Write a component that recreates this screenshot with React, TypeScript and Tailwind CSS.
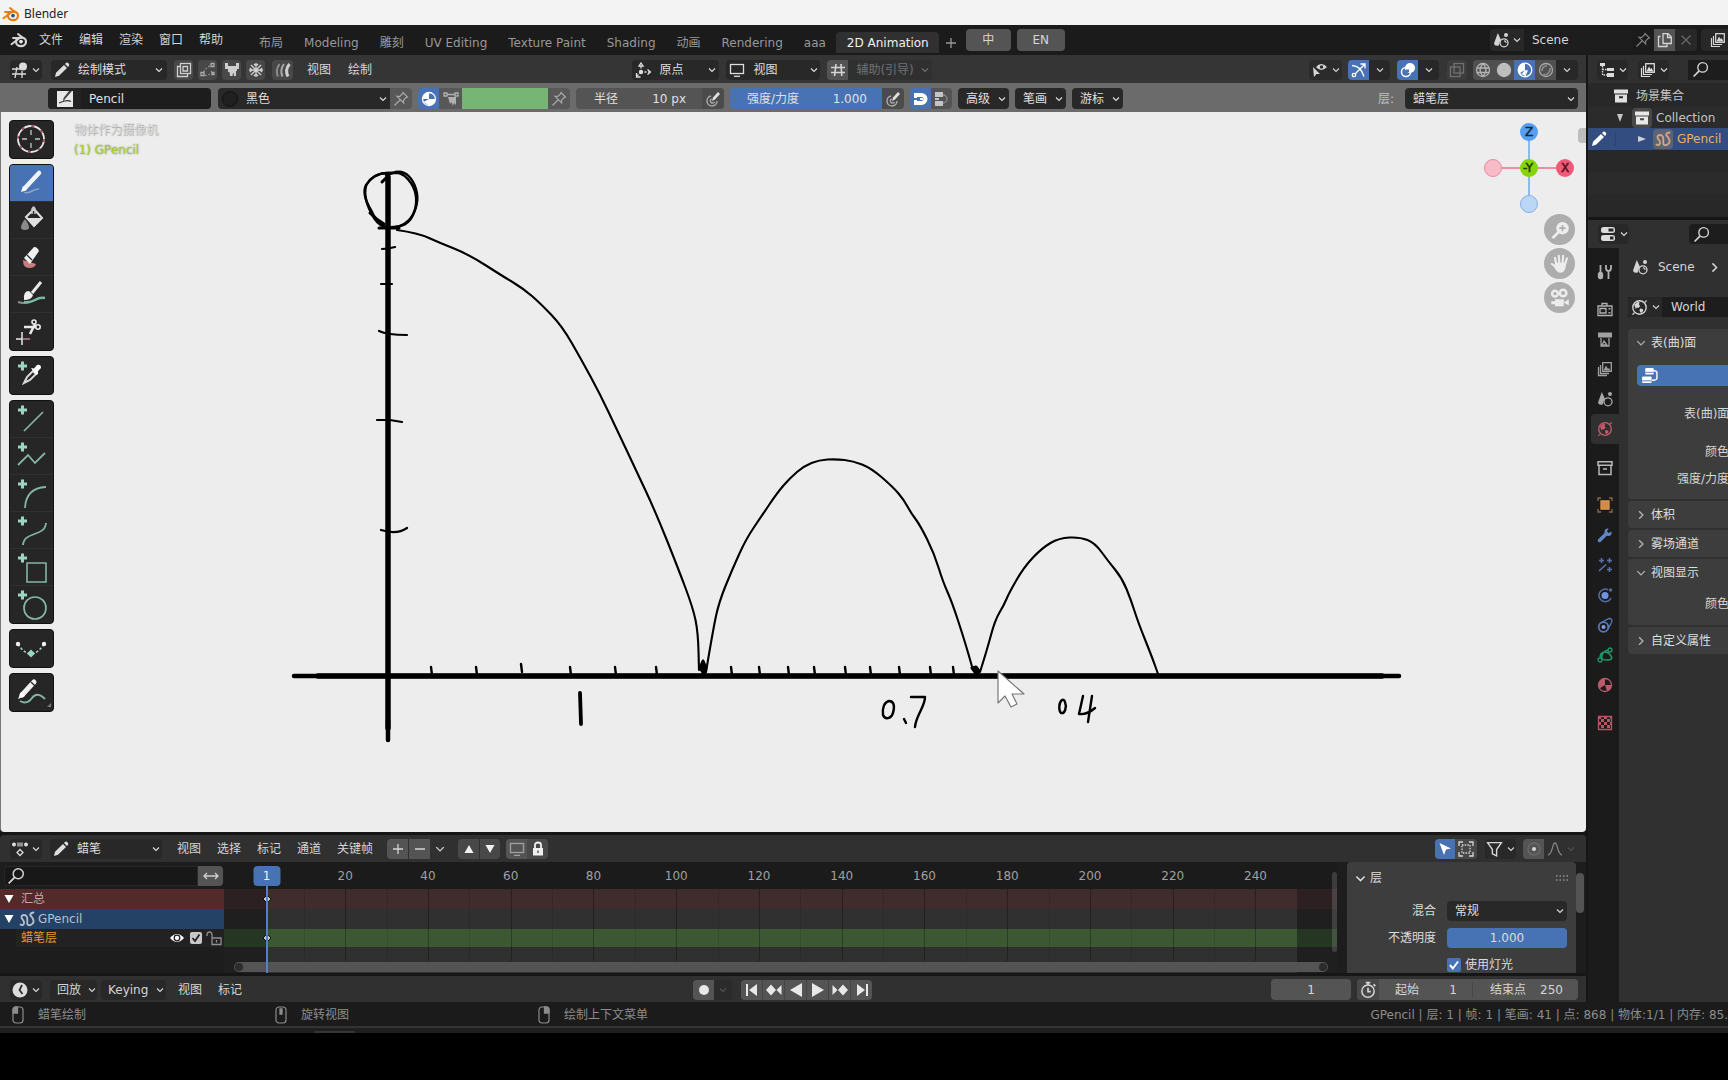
import { useState } from 'react'
import type { ReactNode } from 'react'

type IconProps = { className?: string }

const frames = [20, 40, 60, 80, 100, 120, 140, 160, 180, 200, 220, 240]
const workspaces = ['布局', 'Modeling', '雕刻', 'UV Editing', 'Texture Paint', 'Shading', '动画', 'Rendering', 'aaa', '2D Animation']

// first and last frame visible in the dope sheet
const FRAME_START = -9.3
const FRAME_SPAN = 269
const framePos = (frame: number) => `${((frame - FRAME_START) / FRAME_SPAN) * 100}%`

/* ---------- icons ---------- */

function Icon({ children, className = 'size-4', box = '0 0 16 16' }: { children: ReactNode; className?: string; box?: string }) {
  return (
    <svg viewBox={box} className={`shrink-0 ${className}`} fill="none" stroke="currentColor" strokeWidth="1.3" aria-hidden="true">
      {children}
    </svg>
  )
}

const Chevron = ({ className = 'size-2' }: IconProps) => (
  <Icon className={className} box="0 0 8 8">
    <path d="M1 2.5 4 5.5 7 2.5" strokeWidth="1.1" />
  </Icon>
)

const BlenderLogo = ({ className, dot = '#e8e8e8' }: IconProps & { dot?: string }) => (
  <Icon className={className} box="0 0 18 16">
    <path d="M1.5 12.2 9 6.5M3 6h8M8 2l5.5 4.3" strokeWidth="2" strokeLinecap="round" />
    <ellipse cx="11" cy="9.8" rx="5" ry="4.4" strokeWidth="2.2" />
    <circle cx="11" cy="9.6" r="1.9" fill={dot} stroke="none" />
  </Icon>
)

const PencilIcon = ({ className }: IconProps) => (
  <Icon className={className}>
    <path d="M1 15l1-4.2L10 3l3 3-8 7.8zM11 2l1.2-1.2q1-.6 2 .3l.6.6q.9 1 .2 2L14 5z" fill="currentColor" stroke="none" />
  </Icon>
)

const PinIcon = ({ className }: IconProps) => (
  <Icon className={className}>
    <path d="M10 1.5 14.5 6l-1.5.6-2.5 2.6.2 2.8L4 5.3l2.8.2L9.4 3zM7 9l-5.5 5.5" strokeWidth="1.2" />
  </Icon>
)

const GreaseIcon = ({ className }: IconProps) => (
  <Icon className={className}>
    <path
      d="M1.5 13.5c2 1.500 4 0 3.500-2.500S1.800 7.500 2.500 5.500 6.500 3.500 7.800 5.500 7.600 12 8.600 13.500s5.400.5 5.900-2.500-2-5.500-3-6.500 0-2.500 3-3"
      strokeWidth="1.800"
      strokeLinecap="round"
    />
  </Icon>
)

const MonitorIcon = ({ className }: IconProps) => (
  <Icon className={className}>
    <rect x="1.5" y="2.5" width="13" height="9" />
    <path d="M5 14.3h6" />
  </Icon>
)

const SearchIcon = ({ className }: IconProps) => (
  <Icon className={className}>
    <circle cx="10" cy="6" r="4.5" />
    <path d="M6.8 9.3 1.5 14.6" strokeWidth="1.6" />
  </Icon>
)

const SceneIcon = ({ className }: IconProps) => (
  <Icon className={className}>
    <path d="M4.8 1 8 8q-1.8 1.5-2.3 5.5Q1.5 14.5 1 11.5z" fill="currentColor" stroke="none" />
    <circle cx="13" cy="3" r="2" fill="currentColor" stroke="none" />
    <circle cx="11" cy="10.8" r="4" />
    <path d="M11 8.8q2 0 2 2" />
  </Icon>
)

const worldArt = (
  <>
    <circle cx="8" cy="8" r="6.3" />
    <path d="M13 3.200q1.500-1.700 1.700-1.700M3 13q-1 1.500-1.700 1.300" />
    <path d="M3 5.500 6.500 2.500 8 3l-.5 2.500 1.200 1L7 8.500 5.500 8 4.500 9.500zM8.500 9l2.500.5.500 1.500-2 2.500L8 11z" fill="currentColor" stroke="none" />
  </>
)

const LayersIcon = ({ className }: IconProps) => (
  <Icon className={className}>
    <path d="M1.5 6v8.5H10M3.5 4v8.5H12" strokeWidth="1.2" />
    <rect x="5.7" y="1.7" width="8.6" height="8.6" />
    <path d="M6.5 9.5 9 4.5l1.5 2.5 1-1 2 3.5z" fill="currentColor" stroke="none" />
  </Icon>
)

const CollectionIcon = ({ className }: IconProps) => (
  <Icon className={className}>
    <path d="M1 1.5h14v4H1z" fill="currentColor" stroke="none" />
    <path d="M2 6.5h12v8H2zM6 8.2v2h4v-2z" fill="currentColor" stroke="none" fillRule="evenodd" />
  </Icon>
)

const GridIcon = ({ className }: IconProps) => (
  <Icon className={className}>
    <path d="M1 5.5h14M1 10.5h14M6 2 4.5 14M11 2l.8 12" strokeWidth="1.6" />
  </Icon>
)

const PressureIcon = ({ className }: IconProps) => (
  <Icon className={className}>
    <path d="M6 5a5 5 0 1 0 6 5M6.5 8a2.2 2.2 0 1 0 3 3" stroke="#a8a8a8" strokeWidth="1.5" />
    <path d="M7 10 8 6.5 13 1l2 2-5 5.5z" fill="currentColor" stroke="none" />
  </Icon>
)

const MaterialIcon = ({ className }: IconProps) => (
  <Icon className={className}>
    <circle cx="8" cy="8" r="6.5" />
    <path d="M8 8V1.500A6.500 6.500 0 0 0 1.500 8zM8 8h6.500A6.500 6.500 0 0 1 8 14.500zM8 8v6.500L2.500 11z" fill="currentColor" stroke="none" />
  </Icon>
)

const MouseIcon = ({ button }: { button: 'left' | 'middle' | 'right' }) => (
  <Icon className="h-[18px] w-3" box="0 0 12 18">
    <rect x="1" y="1" width="10" height="16" rx="3" strokeWidth="1.2" />
    {button === 'left' && <path d="M1 4q0-3 3-3h1.5v6H1z" fill="currentColor" />}
    {button === 'middle' && <path d="M5 3h2v5H5z" fill="currentColor" />}
    {button === 'right' && <path d="M6.5 1H8q3 0 3 3v3H6.5z" fill="currentColor" />}
  </Icon>
)

/* ---------- small controls ---------- */

function Btn({ label, className = '', children }: { label: string; className?: string; children: ReactNode }) {
  return (
    <button type="button" aria-label={label} title={label} className={`flex shrink-0 items-center justify-center ${className}`}>
      {children}
    </button>
  )
}

function EditorMenu({ label, children, className = 'w-8' }: { label: string; children: ReactNode; className?: string }) {
  return (
    <Btn label={label} className={`h-5 gap-1 rounded bg-[#282828] text-[#dcdcdc] ${className}`}>
      {children}
      <Chevron />
    </Btn>
  )
}

function Dropdown({ label, value, icon, className = '' }: { label: string; value: string; icon?: ReactNode; className?: string }) {
  return (
    <div className={`flex shrink-0 items-center rounded bg-[#282828] px-2 text-[#dedede] ${className}`}>
      {icon && <span className="mr-2 flex">{icon}</span>}
      <select aria-label={label} defaultValue={value} className="min-w-0 flex-1 appearance-none bg-transparent outline-none">
        <option>{value}</option>
      </select>
      <Chevron />
    </div>
  )
}

function MenuButton({ children }: { children: ReactNode }) {
  return (
    <button type="button" className="shrink-0">
      {children}
    </button>
  )
}

/* ---------- top bars ---------- */

function TopBar() {
  const [active, setActive] = useState('2D Animation')
  return (
    <header className="flex h-[30px] items-center overflow-hidden bg-[#1b1b1b] text-[#d5d5d5]">
      <BlenderLogo className="ml-[10px] h-4 w-[18px]" />
      <nav className="ml-[11px] flex gap-4">
        {['文件', '编辑', '渲染', '窗口', '帮助'].map((item) => (
          <MenuButton key={item}>{item}</MenuButton>
        ))}
      </nav>
      <div className="ml-[25px] flex h-full items-end pb-[2px]" role="tablist">
        {workspaces.map((name) => (
          <button
            key={name}
            type="button"
            role="tab"
            aria-selected={active === name}
            onClick={() => setActive(name)}
            className={`h-[21px] shrink-0 rounded-t pl-[11px] pr-[10px] ${active === name ? 'bg-[#303030] text-[#f0f0f0]' : 'text-[#989898]'}`}
          >
            {name}
          </button>
        ))}
        <Btn label="添加工作区" className="ml-[2px] size-[21px] text-[#989898]">
          <Icon className="size-3" box="0 0 12 12">
            <path d="M6 1v10M1 6h10" />
          </Icon>
        </Btn>
      </div>
      <button type="button" className="ml-1 h-[22px] w-[45px] shrink-0 rounded bg-[#545454]">中</button>
      <button type="button" className="ml-[6px] h-[22px] w-12 shrink-0 rounded bg-[#545454]">EN</button>
      <div className="ml-auto flex h-[22px] w-[238px] shrink-0 overflow-hidden">
        <Btn label="场景" className="w-[34px] gap-1 rounded-l bg-[#282828]">
          <SceneIcon className="size-4" />
          <Chevron />
        </Btn>
        <input aria-label="场景名称" defaultValue="Scene" className="w-[108px] bg-[#1d1d1d] pl-2 outline-none" />
        <Btn label="固定" className="w-[22px] text-[#808080]">
          <PinIcon className="size-4" />
        </Btn>
        <Btn label="新建场景" className="w-[21px] bg-[#545454]">
          <Icon className="size-4">
            <path d="M6 1.7h5L14.3 5v6.5H6zM10.5 2v3.5H14M3.5 4.5h-2v10h8.500v-2" />
          </Icon>
        </Btn>
        <Btn label="删除场景" className="w-[22px] rounded-r bg-[#282828] text-[#686868]">
          <Icon className="size-3" box="0 0 12 12">
            <path d="m1.5 1.5 9 9M10.5 1.5l-9 9" />
          </Icon>
        </Btn>
        <Btn label="视图层" className="ml-1 w-[34px] rounded bg-[#282828]">
          <LayersIcon className="size-4" />
        </Btn>
      </div>
    </header>
  )
}

const BrushToggle = ({ label, children, wide = false }: { label: string; children: ReactNode; wide?: boolean }) => (
  <Btn label={label} className={`h-5 rounded bg-[#484848] text-[#cfcfcf] ${wide ? 'ml-[2px] w-[21px]' : 'w-[19px]'}`}>
    {children}
  </Btn>
)

function ViewHeader() {
  return (
    <div className="flex h-7 items-center bg-[#353535] pl-[10px] pr-2 pt-px text-[#d5d5d5]">
      <EditorMenu label="编辑器类型">
        <Icon className="size-4">
          <path d="M0 7h9M0 12h14M5 5 3 16M10 9v7" />
          <circle cx="11" cy="4.5" r="4" fill="currentColor" stroke="none" />
        </Icon>
      </EditorMenu>
      <Dropdown label="模式" value="绘制模式" icon={<PencilIcon className="size-4" />} className="ml-[9px] h-5 w-[116px] pl-[3px] pr-1" />
      <div className="ml-[7px] flex gap-[5px]">
        <BrushToggle label="多帧">
          <Icon>
            <rect x="4.5" y="1.5" width="10" height="10" />
            <path d="M4 4.5H1.5v10h10V12M7 4.5h4.5V9H7z" />
          </Icon>
        </BrushToggle>
        <BrushToggle label="相加绘制">
          <Icon>
            <path d="M4 10q1-4 6-6M5 13.5q5 0 7-5" strokeDasharray="1.5 2" stroke="#999" />
            <path d="M1 10.5h3v3H1zM11 1.5h3v3h-3zM12 10.5h2v2h-2z" stroke="#aaa" />
          </Icon>
        </BrushToggle>
        <BrushToggle label="自动融合">
          <Icon>
            <path d="M1 1h3v3h8V1h3v6h-2v2h-1v5h-2l-.5-3H9l-.5 3H6l-.5-4H4V7H1z" fill="currentColor" stroke="none" />
          </Icon>
        </BrushToggle>
        <BrushToggle label="冻结">
          <Icon>
            <path d="M8 1v14M1 8h14M3 3l10 10M13 3 3 13M6 2l2 2 2-2M6 14l2-2 2 2M2 6l2 2-2 2M14 6l-2 2 2 2" />
          </Icon>
        </BrushToggle>
        <BrushToggle label="笔刷引导" wide>
          <Icon>
            <path d="M4.5 2Q0 8 3 14.5" stroke="#8d8d8d" strokeWidth="2" />
            <path d="M9 2Q4.5 8 7.5 14.5" stroke="#a8a8a8" strokeWidth="2" />
            <path d="M14.5 2q-5 6-1.500 12.500" strokeWidth="3" />
          </Icon>
        </BrushToggle>
      </div>
      <nav className="ml-[14px] flex gap-[17px]">
        <MenuButton>视图</MenuButton>
        <MenuButton>绘制</MenuButton>
      </nav>
      <div className="flex-[260]" />
      <Dropdown
        label="笔画位置"
        value="原点"
        className="h-5 w-[87px] pl-[3px] pr-[3px]"
        icon={
          <Icon>
            <path d="M6 10V3M6 10h8M6 10l-4 4" strokeDasharray="2 1.5" />
            <path d="M4 4l2-3 2 3zM12.5 7.5 15.5 10l-3 2.500M1.500 11v4h4" />
            <circle cx="6" cy="10" r="2.2" fill="currentColor" stroke="none" />
          </Icon>
        }
      />
      <Dropdown label="绘制平面" value="视图" className="ml-[7px] h-5 w-[94px] pl-[3px] pr-[2px]" icon={<MonitorIcon className="size-4" />} />
      <Btn label="辅助引导" className="ml-[7px] h-5 w-[21px] rounded-l bg-[#545454]">
        <GridIcon className="size-4" />
      </Btn>
      <button type="button" disabled className="flex h-5 w-[84px] shrink-0 items-center justify-between bg-[#303030] pl-2 pr-[3px] text-[#707070]">
        辅助(引导)
        <Chevron />
      </button>
      <div className="flex-[376]" />
      <Btn label="物体可见性" className="h-5 w-[33px] gap-1 rounded bg-[#2b2b2b]">
        <Icon>
          <path d="M4 5q5-6 11 0-6 6-11 0z" fill="currentColor" stroke="none" />
          <circle cx="9.5" cy="5" r="1.7" fill="#2b2b2b" stroke="none" />
          <path d="M1 5l7 7H4.5L2 15z" fill="currentColor" stroke="none" />
        </Icon>
        <Chevron />
      </Btn>
      <Btn label="显示 Gizmo" className="ml-[6px] h-5 w-[21px] rounded-l bg-[#4772b3] text-white">
        <Icon>
          <path d="M1 3.5q9 .5 12 11M4 12l9.5-9.500M9.500 2H14v4.500" />
          <circle cx="3" cy="13" r="1.7" />
        </Icon>
      </Btn>
      <Btn label="Gizmo 选项" className="h-5 w-[21px] rounded-r bg-[#282828]">
        <Chevron />
      </Btn>
      <Btn label="叠加层" className="ml-[7px] h-5 w-[21px] rounded-l bg-[#4772b3] text-white">
        <Icon>
          <circle cx="10" cy="6" r="5" fill="currentColor" stroke="none" />
          <circle cx="6" cy="10" r="4.5" strokeWidth="1.5" />
          <path d="M6 10V7.500h3V10z" fill="#4772b3" stroke="none" />
        </Icon>
      </Btn>
      <Btn label="叠加层选项" className="h-5 w-[21px] rounded-r bg-[#282828]">
        <Chevron />
      </Btn>
      <Btn label="透视模式" className="ml-2 h-5 w-5 rounded bg-[#3d3d3d] text-[#707070]">
        <Icon>
          <rect x="5" y="1.5" width="9.5" height="9.5" />
          <rect x="1.5" y="5" width="9.5" height="9.5" />
        </Icon>
      </Btn>
      <div className="ml-[6px] flex h-5 overflow-hidden rounded">
        <Btn label="线框" className="w-5 bg-[#505050] text-[#b5b5b5]">
          <Icon>
            <circle cx="8" cy="8" r="6.5" />
            <path d="M8 1.5q-6 6.5 0 13M8 1.5q6 6.5 0 13M2 6h12M2 10.5h12" />
          </Icon>
        </Btn>
        <Btn label="实体" className="w-[21px] bg-[#505050] text-[#bdbdbd]">
          <Icon>
            <circle cx="8" cy="8" r="7.2" fill="currentColor" stroke="none" />
          </Icon>
        </Btn>
        <Btn label="材质预览" className="w-[21px] bg-[#4772b3] text-white">
          <Icon>
            <circle cx="8" cy="8" r="6.8" />
            <path d="M8 8V1.200A6.800 6.800 0 0 0 2 11.500l1.500 2zM8 8l3 .5-2 4.500zM3 11l5-3 1 6.500z" fill="currentColor" stroke="none" />
          </Icon>
        </Btn>
        <Btn label="渲染" className="w-[21px] bg-[#505050] text-[#a8a8a8]">
          <Icon>
            <circle cx="8" cy="8" r="6.5" />
            <path d="M4 9a4.5 4.5 0 0 1 5-5M5 12.5Q11 14 12.5 6" strokeWidth="1.800" stroke="#888" />
          </Icon>
        </Btn>
        <Btn label="着色选项" className="w-[22px] bg-[#282828]">
          <Chevron />
        </Btn>
      </div>
    </div>
  )
}

function ToolSettings() {
  return (
    <div className="flex h-[29px] items-center bg-[#6b6b6b] pl-12 pr-2 pt-[2px] text-[#e0e0e0]">
      <div className="flex h-[21px] w-[163px] shrink-0 overflow-hidden rounded bg-[#1d1d1d]">
        <Btn label="笔刷" className="w-[33px] bg-[#222222]">
          <Icon>
            <path d="M0 0h16v16H0z" fill="#e8e8e8" stroke="none" />
            <path d="M15 0 8 8l-2 3 .5-4L12 0z" fill="#444" stroke="none" />
            <path d="M2 12q8-4 12-1.5" stroke="#333" />
          </Icon>
        </Btn>
        <input aria-label="笔刷名称" defaultValue="Pencil" className="min-w-0 flex-1 bg-transparent pl-2 outline-none" />
      </div>
      <Dropdown
        label="材质"
        value="黑色"
        className="ml-[7px] h-[21px] w-[172px] rounded-r-none pl-1 pr-[3px]"
        icon={<span className="size-4 rounded-full border border-[#111111] bg-[#202020]" />}
      />
      <Btn label="固定材质" className="h-[21px] w-[22px] rounded-r bg-[#585858] text-[#a8a8a8]">
        <PinIcon className="size-4" />
      </Btn>
      <div className="ml-[6px] flex h-[21px] overflow-hidden rounded bg-[#585858]">
        <Btn label="材质颜色" className="w-[21px] bg-[#4772b3] text-white">
          <MaterialIcon className="size-4" />
        </Btn>
        <Btn label="顶点色" className="w-[23px] text-[#b0b0b0]">
          <Icon>
            <path d="M1 2h3v3H1zM12 2h3v3h-3zM4 3.5h8" />
            <path d="M5 6h8v8l-2-2-1 3-1.5-4L7 13z" fill="currentColor" stroke="none" />
          </Icon>
        </Btn>
        <Btn label="颜色" className="w-[86px] bg-[#76b574]">
          <span />
        </Btn>
        <Btn label="固定颜色" className="w-[22px] text-[#a8a8a8]">
          <PinIcon className="size-4" />
        </Btn>
      </div>
      <div className="ml-[6px] flex h-[21px] shrink-0 items-center overflow-hidden rounded bg-[#545454]">
        <label htmlFor="radius" className="w-[60px] pl-[18px]">半径</label>
        <input id="radius" defaultValue="10 px" className="w-[66px] bg-transparent pr-4 text-right outline-none" />
        <Btn label="半径压感" className="h-full w-[22px] bg-[#4b4b4b]">
          <PressureIcon className="size-4" />
        </Btn>
      </div>
      <div className="ml-[6px] flex h-[21px] shrink-0 items-center overflow-hidden rounded bg-[#4772b3]">
        <label htmlFor="strength" className="w-[80px] pl-[17px]">强度/力度</label>
        <input id="strength" defaultValue="1.000" className="w-[72px] bg-transparent pr-[15px] text-right outline-none" />
        <Btn label="力度压感" className="h-full w-[22px] bg-[#4b4b4b]">
          <PressureIcon className="size-4" />
        </Btn>
      </div>
      <div className="ml-[6px] flex h-[21px] overflow-hidden rounded">
        <Btn label="绘制模式" className="w-[21px] bg-[#4772b3] text-white">
          <Icon>
            <path d="M2 4h6.500a4 4 0 0 1 0 8H2" strokeWidth="4" />
            <path d="M1 2h3v5H1zM1 9h3v5H1zM7 7h3v2H7z" fill="currentColor" stroke="none" />
          </Icon>
        </Btn>
        <Btn label="材质模式" className="w-[21px] bg-[#545454] text-[#c5c5c5]">
          <Icon>
            <path d="M1 1h8v5H1zM1 10h8v5H1zM1 7h4v2H1z" fill="currentColor" stroke="none" />
            <path d="M9 4a4 4 0 0 1 0 8" stroke="#888" />
          </Icon>
        </Btn>
      </div>
      {['高级', '笔画', '游标'].map((name) => (
        <button key={name} type="button" className="ml-[6px] flex h-[21px] w-[51px] shrink-0 items-center justify-between rounded bg-[#282828] pl-2 pr-[3px]">
          {name}
          <Chevron />
        </button>
      ))}
      <span className="ml-auto mr-[11px] text-[#c0c0c0]">层:</span>
      <Dropdown label="层" value="蜡笔层" className="h-[21px] w-[173px] pr-[3px]" />
    </div>
  )
}

/* ---------- viewport ---------- */

const Plus = () => <path d="M8 9h9M12.500 4.500v9" stroke="#9bd6c0" strokeWidth="3" />

const toolGroups: { name: string; art: ReactNode }[][] = [
  [
    {
      name: '游标',
      art: (
        <>
          <circle cx="21" cy="18" r="13" stroke="#e8e8e8" strokeWidth="1.8" />
          <circle cx="21" cy="18" r="13" stroke="#a0495a" strokeWidth="1.8" strokeDasharray="3 7.2" />
          <path d="M21 9v5M21 22v5M12 18h5M25 18h5" stroke="#c8c8c8" strokeWidth="1.300" />
        </>
      ),
    },
  ],
  [
    {
      name: '自由线',
      art: (
        <>
          <path d="M15 23 29 8" stroke="#eef3fb" strokeWidth="4.500" strokeLinecap="round" />
          <path d="m11 27 2-6 4 4z" fill="#fff" stroke="none" />
          <path d="M14 27q3 2 8-1 4-2 7-2" stroke="#8aa2cc" strokeWidth="1.500" />
        </>
      ),
    },
    {
      name: '填充',
      art: (
        <>
          <path d="m16 15 8-8 8 9-8 8z" stroke="#e0e0e0" strokeWidth="2" />
          <path d="M17 16h14l-7 8z" fill="#e0e0e0" stroke="none" />
          <path d="M22 12V7q2-4 3 0v5" stroke="#c8c8c8" strokeWidth="1.600" />
          <path d="M15 17q-8 11 0 11t0-11z" fill="#8a8a8a" stroke="none" />
        </>
      ),
    },
    {
      name: '擦除',
      art: (
        <>
          <path d="M13 21q0 8 6 8t7-4z" fill="#c87c80" stroke="none" />
          <path d="m14 19 10-11q3-.500 5 4L20 25z" fill="#f0f0f0" stroke="none" />
          <path d="m17 16 5 5" stroke="#262626" />
        </>
      ),
    },
    {
      name: '着色',
      art: (
        <>
          <path d="m31 6-9 11" stroke="#e8e8e8" strokeWidth="3" />
          <path d="M14 24q-1-9 5-9l4 4q-1 5-9 5z" fill="#f0f0f0" stroke="none" />
          <path d="M8 26q6 2 12 0" stroke="#909090" strokeWidth="2" />
          <path d="M14 26q6 1 11-2t10-2" stroke="#79b8a5" strokeWidth="2.600" />
        </>
      ),
    },
    {
      name: '剪切',
      art: (
        <>
          <path d="M14 14h12M20 21l5-10" stroke="#e8e8e8" strokeWidth="2.6" />
          <circle cx="24" cy="9" r="2" stroke="#e8e8e8" strokeWidth="1.600" />
          <circle cx="28" cy="14" r="2.200" stroke="#e8e8e8" strokeWidth="1.600" />
          <path d="M12 19v13M6 26h6" stroke="#e8e8e8" strokeWidth="1.500" />
          <path d="M13 26h7" stroke="#c8808c" strokeWidth="1.500" />
        </>
      ),
    },
  ],
  [
    {
      name: '吸管',
      art: (
        <>
          <Plus />
          <path d="m14 26 3-6 6-6 3 3-6 6z" stroke="#d8d8d8" strokeWidth="2" />
          <path d="m21 11 3 .5L27 8q4-1 4 3l-3 3v3l-2 1z" fill="#fff" stroke="none" />
        </>
      ),
    },
  ],
  [
    { name: '线', art: <><Plus /><path d="M14 30 33 11" stroke="#85b5a4" strokeWidth="1.700" /></> },
    { name: '折线', art: <><Plus /><path d="m8 27 10-10 7 8 10-10" stroke="#85b5a4" strokeWidth="1.800" /></> },
    { name: '弧线', art: <><Plus /><path d="M15 33Q16 13 36 12" stroke="#85b5a4" strokeWidth="1.800" /></> },
    { name: '曲线', art: <><Plus /><path d="M13 33c1-14 22-8 23-22" stroke="#85b5a4" strokeWidth="1.800" /></> },
    { name: '方框', art: <><Plus /><path d="M17 14h19v19H17z" stroke="#85b5a4" strokeWidth="1.600" /></> },
    { name: '圆', art: <><Plus /><circle cx="25" cy="22" r="11" stroke="#85b5a4" strokeWidth="1.700" /></> },
  ],
  [
    {
      name: '插值',
      art: (
        <>
          <path d="M8 14q13 20 26 0" stroke="#a8c8bc" strokeDasharray="2.5 2" strokeWidth="1.600" />
          <circle cx="8" cy="14" r="2.200" fill="#f0f0f0" stroke="none" />
          <circle cx="34" cy="14" r="2.200" fill="#f0f0f0" stroke="none" />
          <path d="m21 19.500 4 4-4 4-4-4z" fill="#9bd6c0" stroke="none" />
        </>
      ),
    },
  ],
  [
    {
      name: '标注',
      art: (
        <>
          <path d="M12 21 24 8" stroke="#f0f0f0" strokeWidth="5" strokeLinecap="round" />
          <path d="M8 25l3-7 4 4z" fill="#fff" stroke="none" />
          <path d="M21 8l4 4" stroke="#262626" />
          <path d="M10 27q7 4 12-3t13 1" stroke="#85b5a4" strokeWidth="2" />
          <path d="M41 29v4h-4z" fill="#777" stroke="none" />
        </>
      ),
    },
  ],
]

function Toolbar() {
  const [active, setActive] = useState('自由线')
  return (
    <div className="relative flex w-[45px] flex-col gap-[5px]">
      {toolGroups.map((group, i) => (
        <div key={i} className="divide-y divide-[#303030] overflow-hidden rounded border border-[#111111] bg-[#262626]">
          {group.map((tool) => (
            <button
              key={tool.name}
              type="button"
              aria-label={tool.name}
              aria-pressed={active === tool.name}
              onClick={() => setActive(tool.name)}
              className={`flex h-[37px] w-full ${active === tool.name ? 'bg-[#4772b3]' : ''}`}
            >
              <Icon className="h-9 w-[43px]" box="0 0 43 36">{tool.art}</Icon>
            </button>
          ))}
        </div>
      ))}
    </div>
  )
}

type Point = [number, number]

const bounces: Point[][] = [
  [
    [397, 230], [418, 233], [440, 243], [468, 254], [504, 277], [524, 289], [541, 304], [562, 326], [581, 359], [600, 394],
    [617, 430], [636, 470], [656, 513], [678, 568], [693, 608], [698, 632], [699, 670],
  ],
  [
    [706, 672], [713, 630], [719, 602], [732, 570], [746, 539], [761, 517], [777, 493], [790, 478], [804, 466], [819, 460],
    [836, 459], [853, 461], [871, 468], [893, 487], [904, 500], [911, 513], [920, 525], [934, 553], [943, 582], [952, 602],
    [965, 642], [973, 670],
  ],
  [
    [980, 672], [987, 650], [995, 620], [1004, 605], [1009, 593], [1024, 567], [1042, 548], [1059, 538], [1080, 537],
    [1095, 543], [1108, 561], [1122, 578], [1131, 600], [1138, 622], [1152, 657], [1158, 674],
  ],
]

// rounds the corners by curving through the midpoint of each segment
function smooth(points: Point[]) {
  const [first, ...rest] = points
  const last = points[points.length - 1]
  const parts = rest.slice(0, -1).map(([x, y], i) => {
    const [nx, ny] = rest[i + 1]
    return `Q${x} ${y} ${(x + nx) / 2} ${(y + ny) / 2}`
  })
  return `M${first[0]} ${first[1]}${parts.join('')}L${last[0]} ${last[1]}`
}

// Strokes on the grease pencil canvas
function Drawing() {
  const xTicks = [432, 477, 522, 571, 616, 657, 732, 760, 789, 815, 846, 871, 900, 931, 954]
  return (
    <svg viewBox="1 112 1585 720" preserveAspectRatio="xMinYMin slice" className="absolute inset-0 size-full" fill="none" stroke="#000" strokeLinecap="round" strokeLinejoin="round" aria-hidden="true">
      <path d="M388 177V728" strokeWidth="5.5" />
      <path d="M388 720v20" strokeWidth="4.5" />
      <path d="M318 676H1382" strokeWidth="5.5" />
      <path d="M294 676H1399" strokeWidth="4.5" />
      <path d="M382 182l5-5" strokeWidth="3" />

      {/* ball */}
      <path d="M392 173c-14-1-22 5-26 13-3 11 2 22 8 32 4 6 9 9 14 9 10 1 20-1 25-12 5-11 4-23-2-32-5-7-9-10-15-11l-10 3" strokeWidth="2.4" />
      <path d="M396 172c10-2 17 7 20 17 3 10 1 22-7 31-6 6-12 8-24 7-7-3-11-10-14-17-6-10-8-19-5-25 4-7 12-12 21-12l13 0" strokeWidth="2.4" />
      <path d="M370 213q7 7 14 11M379 228h20" strokeWidth="3" />

      {bounces.map((points, i) => (
        <path key={i} d={smooth(points)} strokeWidth="2.1" />
      ))}

      {xTicks.map((x) => (
        <path key={x} d={`M${x - 1} ${x === 522 ? 664 : 667}l1 8`} strokeWidth="2.4" />
      ))}
      <path d="M382 249q6 0 13-2M381 284h11M379 331q8 4 28 4M377 420l13 0 12 2M381 530q16 5 26-2" strokeWidth="2.2" />
      <path d="M700 668l3-7 3 7-2 6zM972 668l4-1 3 4-2 4z" fill="#000" strokeWidth="3" />

      {/* handwritten height ratios */}
      <path d="M580 693l1 31" strokeWidth="3.8" />
      <path d="M889 701c-5 1-7 8-6 14 2 5 8 4 10-2 2-7 1-12-4-12zM904 719l2 4M911 697h14c0 10-9 18-10 30" strokeWidth="2.4" />
      <path d="M1062 700c-4 3-3 11-1 13 4 1 6-6 4-11q-1-3-3-2zM1083 696l-4 18q8 1 16-6M1092 696l-4 26" strokeWidth="2.4" />

      {/* mouse pointer */}
      <path d="M998 671v32l7-7 6 11 6-3-5-10h12z" fill="#fff" stroke="#777" strokeWidth="1.2" />
    </svg>
  )
}

function Gizmo() {
  return (
    <svg viewBox="0 0 92 92" className="size-[92px]" fontSize="12" textAnchor="middle" aria-label="视图方向">
      <path d="M10 46h72" stroke="#ee6a84" strokeWidth="1.5" />
      <path d="M46 10v72" stroke="#6aa8f0" strokeWidth="1.5" />
      <circle cx="10" cy="46" r="8.5" fill="#f8bcc8" stroke="#e889a0" />
      <circle cx="82" cy="46" r="9" fill="#ee5a78" />
      <circle cx="46" cy="10" r="9" fill="#559ff0" />
      <circle cx="46" cy="82" r="8.5" fill="#bcd6f6" stroke="#85b0e6" />
      <circle cx="46" cy="46" r="9" fill="#88d40c" />
      <g strokeWidth="0.5">
        <text x="46" y="14" fill="#10253c" stroke="#10253c">Z</text>
        <text x="45" y="50" fill="#203a00" stroke="#203a00">-Y</text>
        <text x="82" y="50" fill="#581020" stroke="#581020">X</text>
      </g>
    </svg>
  )
}

function Viewport() {
  return (
    <main className="relative min-h-0 flex-1 overflow-hidden rounded-b border-l border-[#777777] bg-[#ededed]">
      <Drawing />
      <div className="relative flex justify-between pl-2 pt-2">
        <div className="flex">
          <Toolbar />
          <div className="ml-5 flex flex-col gap-1 pt-[2px]">
            <p className="text-[#dadada] [text-shadow:1px_1px_1px_#a0a0a0]">物体作为摄像机</p>
            <p className="text-[#a6cc2c] [text-shadow:0_0_2px_#8a9a50]">(1) GPencil</p>
          </div>
        </div>
        <div className="flex flex-col items-end pr-[11px] pt-[2px]">
          <Gizmo />
          <div className="flex flex-col gap-[3px] text-[#ededed]">
            <Btn label="缩放" className="size-[31px] rounded-full bg-[#adadad]">
              <Icon className="size-5">
                <circle cx="10" cy="6.5" r="5" fill="currentColor" stroke="none" />
                <path d="M7 9.5 2 14.5" strokeWidth="2.2" />
                <path d="M10 4v5M7.5 6.5h5" stroke="#adadad" />
              </Icon>
            </Btn>
            <Btn label="平移" className="size-[31px] rounded-full bg-[#adadad]">
              <Icon className="size-5">
                <path d="M5 8 4 3M7.5 7.5 7 1.5M10 7.5l.5-6M12 8.5 13.5 3.5M5.5 11 1.5 8" strokeWidth="1.7" strokeLinecap="round" />
                <path d="M4.2 7h8.500q.5 8-4.700 8Q5.500 15 3 10z" fill="currentColor" stroke="none" />
              </Icon>
            </Btn>
            <Btn label="摄像机视图" className="size-[31px] rounded-full bg-[#adadad]">
              <Icon className="size-5">
                <circle cx="4" cy="4.5" r="2.3" strokeWidth="2" />
                <circle cx="10.5" cy="4" r="2.6" strokeWidth="2" />
                <path d="M4 9h7v5.500H4zM11 11.500l4-2.500v5zM4 10.500H1V13h3z" fill="currentColor" stroke="none" />
              </Icon>
            </Btn>
          </div>
        </div>
      </div>
      <Btn label="显示侧栏" className="absolute right-0 top-4 h-[15px] w-2 rounded-l bg-[#bdbdbd]">
        <span />
      </Btn>
    </main>
  )
}

/* ---------- dope sheet ---------- */

function DopeHeader() {
  return (
    <div className="mt-[3px] flex h-[27px] shrink-0 items-center rounded-t bg-[#303030] pl-[10px] pr-2 pt-px text-[#d5d5d5]">
      <EditorMenu label="编辑器类型">
        <Icon>
          <circle cx="2" cy="3.5" r="2" fill="currentColor" stroke="none" />
          <circle cx="14" cy="3.5" r="2" fill="currentColor" stroke="none" />
          <path d="M5 1.5h6v4H5z" fill="#909090" stroke="none" />
          <path d="m8 8.5 3 3-3 3-3-3z" />
        </Icon>
      </EditorMenu>
      <Dropdown label="动画模式" value="蜡笔" icon={<PencilIcon className="size-4" />} className="ml-2 h-5 w-[112px] pl-[3px] pr-[2px]" />
      <nav className="ml-[15px] flex gap-4">
        {['视图', '选择', '标记', '通道', '关键帧'].map((item) => (
          <MenuButton key={item}>{item}</MenuButton>
        ))}
      </nav>
      <div className="ml-[14px] flex h-5 gap-px overflow-hidden rounded-l">
        <Btn label="添加" className="w-[21px] bg-[#545454]">
          <Icon className="size-3" box="0 0 12 12"><path d="M6 1v10M1 6h10" /></Icon>
        </Btn>
        <Btn label="移除" className="w-[21px] bg-[#545454]">
          <Icon className="size-3" box="0 0 12 12"><path d="M1 6h10" /></Icon>
        </Btn>
      </div>
      <Btn label="更多" className="ml-[3px] h-5 w-[14px]">
        <Chevron className="size-[10px]" />
      </Btn>
      <div className="ml-[11px] flex h-5 gap-px overflow-hidden rounded text-[#f0f0f0]">
        <Btn label="上移" className="w-[21px] bg-[#484848]">
          <Icon className="size-3" box="0 0 12 12"><path d="M6 2 10.500 10h-9z" fill="currentColor" stroke="none" /></Icon>
        </Btn>
        <Btn label="下移" className="w-[20px] bg-[#484848]">
          <Icon className="size-3" box="0 0 12 12"><path d="M6 10 10.500 2h-9z" fill="currentColor" stroke="none" /></Icon>
        </Btn>
      </div>
      <div className="ml-[6px] flex h-5 overflow-hidden rounded">
        <Btn label="仅显示选中" className="w-[21px] bg-[#545454] text-[#a0a0a0]"><MonitorIcon className="size-4" /></Btn>
        <Btn label="锁定" className="w-[21px] bg-[#484848] text-[#f0f0f0]">
          <Icon>
            <path d="M3 7h10v7.500H3z" fill="currentColor" stroke="none" />
            <path d="M5 7V4q0-2.500 3-2.500T11 4v3" strokeWidth="1.8" />
            <path d="M8 9.500v2.500" stroke="#484848" />
          </Icon>
        </Btn>
      </div>
      <div className="ml-auto flex h-5 overflow-hidden rounded">
        <Btn label="仅选中项" className="w-5 bg-[#4772b3] text-white">
          <Icon><path d="M2.500 2 14 7.500l-5 1L7 14z" fill="currentColor" stroke="none" /></Icon>
        </Btn>
        <Btn label="显示隐藏" className="w-[22px] bg-[#484848]">
          <Icon>
            <path d="M1 5V1h4M11 1h4v4M15 11v4h-4M5 15H1v-4" />
            <path d="M4 4h8v8H4z" strokeDasharray="1.5 1.2" />
          </Icon>
        </Btn>
      </div>
      <Btn label="过滤" className="ml-2 h-5 w-[31px] gap-1 rounded bg-[#282828]">
        <Icon className="size-[17px]"><path d="M1.500 1.500h13L10 8v6l-4-2V8z" /></Icon>
        <Chevron />
      </Btn>
      <Btn label="衰减编辑" className="ml-[7px] h-5 w-[21px] rounded-l bg-[#545454]">
        <Icon>
          <circle cx="8" cy="8" r="6" stroke="#6a6a6a" />
          <circle cx="8" cy="8" r="2" fill="currentColor" stroke="none" />
        </Icon>
      </Btn>
      <Btn label="衰减类型" className="h-5 w-[34px] gap-1 text-[#858585]">
        <Icon><path d="M1 14c5-1 4-12 7-12s2 11 7 12" /></Icon>
        <Chevron className="size-2 text-[#505050]" />
      </Btn>
    </div>
  )
}

const DownTriangle = () => (
  <svg viewBox="0 0 10 10" className="size-[10px] shrink-0 text-white" fill="currentColor" aria-hidden="true">
    <path d="M.500 1h9L5 9z" />
  </svg>
)

function Channels() {
  return (
    <div className="w-56 shrink-0 bg-[#1d1d1d] pt-1">
      <div className="mb-[3px] flex h-5 items-center pl-1 pr-px">
        <label className="flex h-full flex-1 items-center rounded-l border border-[#282828] bg-[#181818] pl-[2px] text-[#d5d5d5]">
          <SearchIcon className="size-[18px]" />
          <input aria-label="搜索通道" className="w-full min-w-0 bg-transparent outline-none" />
        </label>
        <Btn label="反转过滤" className="h-5 w-[25px] rounded-r bg-[#545454] text-[#d0d0d0]">
          <Icon><path d="M1 8h14M4 5 1 8l3 3M12 5l3 3-3 3" /></Icon>
        </Btn>
      </div>
      <div className="flex h-5 items-center gap-[7px] bg-[#522a2a] pl-1 text-[#c0a8a8]">
        <DownTriangle />
        汇总
      </div>
      <div className="flex h-5 items-center bg-[#244166] pl-1 text-[#b8c0cc]">
        <DownTriangle />
        <GreaseIcon className="ml-[5px] mr-[3px] size-4" />
        GPencil
      </div>
      <div className="ml-4 flex h-[18px] items-center bg-[#222222] pl-[5px] text-[#e09a22]">
        蜡笔层
        <div className="ml-auto flex items-center gap-1 pr-[2px]">
          <Icon className="size-4 text-white">
            <path d="M1 8q7-8 14 0-7 8-14 0z" fill="currentColor" stroke="none" />
            <circle cx="8" cy="8" r="2.8" fill="currentColor" stroke="#222" />
          </Icon>
          <span className="relative ml-px flex">
            <input type="checkbox" aria-label="显示蜡笔层" defaultChecked className="size-3 appearance-none rounded-xs bg-[#c8c8c8]" />
            <Icon className="pointer-events-none absolute inset-0 size-3 text-[#222222]" box="0 0 12 12">
              <path d="m2.500 6 2.500 3 4.500-6.500" strokeWidth="1.8" />
            </Icon>
          </span>
          <Icon className="size-4 text-[#909090]">
            <path d="M6 8h9v6.500H6zM6 8V5q0-3-2.500-3T1 5v1M10.500 10v2.500" />
          </Icon>
        </div>
      </div>
    </div>
  )
}

const Keyframe = ({ className }: IconProps) => (
  <svg viewBox="0 0 10 10" className={`absolute size-[10px] -translate-x-1/2 ${className}`} style={{ left: framePos(1) }} aria-hidden="true">
    <path d="M5 1 9 5 5 9 1 5z" fill="#c8c8c8" stroke="#111" />
  </svg>
)

function Timeline() {
  const range = { left: framePos(1), right: `calc(100% - ${framePos(250)})` }
  return (
    <div className="relative min-w-0 flex-1 overflow-hidden bg-[#1f1f1f] text-[#a0a0a0]">
      <div className="relative h-[27px] bg-[#1b1b1b]">
        {frames.map((frame) => (
          <span key={frame} className="absolute top-[6px] -translate-x-1/2" style={{ left: framePos(frame) }}>
            {frame}
          </span>
        ))}
      </div>
      <div className="absolute bottom-0 top-[27px] bg-[#303030]" style={range} />
      <div className="relative h-5 bg-[#2c2022]">
        <div className="absolute inset-y-0 bg-[#402b2d]" style={range} />
        <Keyframe className="top-[5px]" />
      </div>
      <div className="relative mt-5 h-[18px] bg-[#253623]">
        <div className="absolute inset-y-0 bg-[#3c5833]" style={range} />
        <Keyframe className="top-1" />
      </div>
      {frames.map((frame) => (
        <div key={frame} className="absolute bottom-3 top-[27px] w-px bg-black/30" style={{ left: framePos(frame) }} />
      ))}
      {frames.map((frame) => (
        <div key={frame} className="absolute bottom-3 top-[27px] w-px bg-black/10" style={{ left: framePos(frame - 10) }} />
      ))}
      <div className="absolute bottom-px left-[10px] right-[9px] flex h-[10px] items-center justify-between rounded-full bg-[#545454] px-px">
        <span className="size-2 rounded-full bg-[#2c2c2c]" />
        <span className="size-2 rounded-full bg-[#2c2c2c]" />
      </div>
      <div className="absolute right-0 top-[10px] h-[80px] w-[5px] rounded bg-white/15" />
      <div className="absolute bottom-0 top-4 w-[2px] -translate-x-1/2 bg-[#5680c2]" style={{ left: framePos(1) }} />
      <div className="absolute top-[4px] h-5 w-[27px] -translate-x-1/2 rounded bg-[#4772b3] text-center leading-5 text-[#f0f0f0]" style={{ left: framePos(1) }}>
        1
      </div>
    </div>
  )
}

function LayerPanel() {
  return (
    <aside className="flex w-[249px] shrink-0 bg-[#1d1d1d] pl-[10px]">
      <div className="flex-1 overflow-hidden rounded-t bg-[#3d3d3d] pt-2 text-[#dcdcdc]">
        <div className="mb-[15px] flex h-4 items-center pl-2 pr-2">
          <Chevron className="mr-1 size-[11px]" />
          层
          <Icon className="ml-auto h-2 w-3 text-[#909090]" box="0 0 12 8">
            <path d="M0 2h12M0 6h12" strokeDasharray="1.5 2" />
          </Icon>
        </div>
        <div className="mb-[7px] flex items-center">
          <span className="w-[89px] text-right">混合</span>
          <Dropdown label="混合" value="常规" className="ml-[11px] h-5 w-[120px] pr-[3px]" />
        </div>
        <div className="mb-[9px] flex items-center">
          <label htmlFor="opacity" className="w-[89px] text-right">不透明度</label>
          <input id="opacity" defaultValue="1.000" className="ml-[11px] h-5 w-[120px] rounded bg-[#4772b3] text-center outline-none" />
        </div>
        <div className="flex items-center pl-[100px]">
          <span className="relative flex">
            <input id="use-lights" type="checkbox" defaultChecked className="size-[14px] appearance-none rounded-xs bg-[#4772b3]" />
            <Icon className="pointer-events-none absolute inset-0 size-[14px] text-white" box="0 0 12 12">
              <path d="m2.500 6 2.500 3 4.500-6" strokeWidth="1.7" />
            </Icon>
          </span>
          <label htmlFor="use-lights" className="ml-1">使用灯光</label>
        </div>
      </div>
      <div className="w-[10px] pt-[11px]">
        <div className="h-10 w-2 rounded bg-[#545454]" />
      </div>
    </aside>
  )
}

const playback = [
  { label: '跳到首帧', art: <path d="M2 2h2v12H2zM13 2v12L5 8z" /> },
  { label: '上一关键帧', art: <path d="m5 2.500 5 5.500-5 5.500L0 8zM15.500 3v10L10.500 8z" /> },
  { label: '倒放', art: <path d="M14 1v14L2 8z" /> },
  { label: '播放', art: <path d="M2 1v14l12-7z" /> },
  { label: '下一关键帧', art: <path d="m11 2.500 5 5.500-5 5.500L6 8zM.5 3v10l5-5z" /> },
  { label: '跳到末帧', art: <path d="M12 2h2v12h-2zM3 2v12l8-6z" /> },
]

function PlaybackBar() {
  return (
    <div className="mt-[3px] flex h-[26px] shrink-0 items-center bg-[#303030] pl-[10px] pr-2 pt-px text-[#d5d5d5]">
      <EditorMenu label="编辑器类型">
        <Icon>
          <circle cx="8" cy="8" r="7.5" fill="currentColor" stroke="none" />
          <path d="M10 3 7.500 8l3 4" stroke="#282828" strokeWidth="1.7" />
        </Icon>
      </EditorMenu>
      <button type="button" className="ml-2 flex h-5 w-[47px] shrink-0 items-center justify-between rounded bg-[#282828] pl-[7px] pr-px">
        回放 <Chevron />
      </button>
      <button type="button" className="ml-1 flex h-5 w-[65px] shrink-0 items-center justify-between rounded bg-[#282828] pl-[7px] pr-[2px]">
        Keying <Chevron />
      </button>
      <nav className="ml-3 flex gap-4">
        <MenuButton>视图</MenuButton>
        <MenuButton>标记</MenuButton>
      </nav>
      <div className="flex-[451]" />
      <Btn label="自动插帧" className="h-5 w-[21px] rounded-l bg-[#545454]">
        <span className="size-[10px] rounded-full bg-[#e8e8e8]" />
      </Btn>
      <Btn label="自动插帧选项" className="h-5 w-[18px] bg-[#2b2b2b] text-[#505050]">
        <Chevron />
      </Btn>
      <div className="ml-[9px] flex h-5 gap-px overflow-hidden rounded bg-[#454545]">
        {playback.map((item) => (
          <Btn key={item.label} label={item.label} className="w-[21px] bg-[#545454] text-[#e8e8e8]">
            <svg viewBox="0 0 16 16" className="size-4" fill="currentColor" aria-hidden="true">{item.art}</svg>
          </Btn>
        ))}
      </div>
      <div className="flex-[399]" />
      <input aria-label="当前帧" defaultValue="1" className="h-[21px] w-20 shrink-0 rounded bg-[#545454] text-center outline-none" />
      <div className="ml-[6px] flex h-[21px] shrink-0 items-center overflow-hidden rounded bg-[#545454]">
        <Btn label="使用预览范围" className="h-full w-[22px] bg-[#484848]">
          <Icon className="size-[18px]">
            <circle cx="8" cy="9" r="5.5" />
            <path d="M6 1.500h4M8 2v2M13 3l1.500 1.500M8 6v3.500h2.500" strokeWidth="1.5" />
          </Icon>
        </Btn>
        <label htmlFor="start" className="w-[52px] pl-4">起始</label>
        <input id="start" defaultValue="1" className="w-[42px] border-r border-[#484848] bg-transparent pr-[15px] text-right outline-none" />
        <label htmlFor="end" className="w-[64px] pl-[17px]">结束点</label>
        <input id="end" defaultValue="250" className="w-[41px] bg-transparent pr-[15px] text-right outline-none" />
      </div>
    </div>
  )
}

/* ---------- right hand editors ---------- */

function Outliner() {
  return (
    <section className="h-[162px] shrink-0 overflow-hidden bg-[#282828] text-[#c5c5c5]">
      <div className="flex h-7 items-center bg-[#303030] pl-[9px] pt-px">
        <EditorMenu label="编辑器类型" className="w-[31px]">
          <Icon>
            <path d="M1 1h5v3H1zM8 6h7v3H8zM8 11h7v4H8z" fill="currentColor" stroke="none" />
            <path d="M3.500 4v9H8M3.500 7.500H8" strokeDasharray="1.5 1" />
          </Icon>
        </EditorMenu>
        <EditorMenu label="显示模式" className="ml-[10px] w-[31px]">
          <LayersIcon className="size-4" />
        </EditorMenu>
        <label className="ml-[19px] flex h-5 w-20 shrink-0 items-center bg-[#1d1d1d] pl-1 text-[#d5d5d5]">
          <SearchIcon className="size-[17px]" />
          <input aria-label="搜索" className="w-full min-w-0 bg-transparent outline-none" />
        </label>
      </div>
      <ul className="w-[200px] pt-[2px]">
        <li className="flex h-[22px] items-center pl-[25px]">
          <CollectionIcon className="mr-[7px] size-4 text-[#e0e0e0]" />
          场景集合
        </li>
        <li className="flex h-[21px] items-center bg-[#2b2b2b] pl-7">
          <svg viewBox="0 0 8 8" className="mr-2 size-2" fill="currentColor" aria-hidden="true"><path d="M1 0h6L4 8z" /></svg>
          <span className="mr-1 flex rounded bg-[#484848] p-[2px] text-[#e8e8e8]">
            <CollectionIcon className="size-4" />
          </span>
          Collection
        </li>
        <li className="flex h-[22px] items-center bg-[#334d80] pl-[3px] text-[#e8b060]">
          <PencilIcon className="mr-2 size-4 text-white" />
          <span className="mr-[22px] h-[14px] w-px bg-[#2c4270]" />
          <svg viewBox="0 0 8 8" className="mr-[7px] size-2 text-[#d0d0d0]" fill="currentColor" aria-hidden="true"><path d="M0 1v6l8-3z" /></svg>
          <span className="mr-1 flex rounded bg-[#5c6474] p-[2px] text-[#d8a284]">
            <GreaseIcon className="size-4" />
          </span>
          GPencil
        </li>
        <li className="h-[22px]" />
        <li className="h-[22px] bg-[#2b2b2b]" />
      </ul>
    </section>
  )
}

const propertyTabs: { name: string; color: string; gap: string; art: ReactNode }[] = [
  { name: '工具', color: 'text-[#b0b0b0]', gap: 'mb-[7px]', art: <><path d="M3.500 1v7M11.500 15V8M9 1v3q0 3 2.500 3T14 4V1" strokeWidth="1.8" /><rect x="1.500" y="8.500" width="4" height="6" rx="1.5" fill="currentColor" /></> },
  { name: '渲染', color: 'text-[#b0b0b0]', gap: '', art: <><path d="M1 5h14v9.500H1zM5 5V2.500h5V5M3 7.500h6v4.500H3z" /><path d="M11.500 7h2v1.500h-2zM11.500 11h2v1.500h-2z" fill="currentColor" stroke="none" /></> },
  { name: '输出', color: 'text-[#a0a0a0]', gap: '', art: <><path d="M1 1.500h14v5H1z" fill="currentColor" stroke="none" /><path d="M4 7v8h8V7M5 14l2-4 3 4z" /></> },
  { name: '视图层', color: 'text-[#a0a0a0]', gap: '', art: <><path d="M1.500 6v8.500H10M3.500 4v8.500H12" /><path d="M5.700 1.700h8.600v8.600H5.700z" /><path d="m6.500 9.500 2.500-5 2 3.500 1-1 1.500 2.500z" fill="currentColor" stroke="none" /></> },
  { name: '场景', color: 'text-[#a8a8a8]', gap: '', art: <><path d="M4.800 1 8 8q-1.800 1.500-2.300 5.500Q1.500 14.500 1 11.500z" fill="currentColor" stroke="none" /><circle cx="13" cy="3" r="2" fill="currentColor" stroke="none" /><circle cx="11" cy="10.800" r="4" /></> },
  { name: '世界', color: 'text-[#c85a6c]', gap: 'mb-[9px]', art: worldArt },
  { name: '集合', color: 'text-[#b8b8b8]', gap: 'mb-[7px]', art: <path d="M1 1.700h14v3.500H1zM2 5.500v9h12v-9M6 9h4" strokeWidth="1.5" /> },
  { name: '物体', color: 'text-[#8a6846]', gap: '', art: <><path d="M4 4h8v8H4z" fill="#d08c48" stroke="#d89850" /><path d="M1 4V1h3M12 1h3v3M15 12v3h-3M4 15H1v-3" /></> },
  { name: '修改器', color: 'text-[#6284c8]', gap: '', art: <><path d="M2.500 13.500 9 7" strokeWidth="3.5" strokeLinecap="round" /><path d="M14.500 4.500 11.500 6 10 4.500 11.500 1.500Q7.500 1 7.500 5t4 4q3.500 0 3-4.500z" fill="currentColor" stroke="none" /></> },
  { name: '视觉特效', color: 'text-[#5a70a8]', gap: '', art: <path d="M2 14 9 7.500M4.500 1v5M2 3.500h5M12.500 1v5M10 3.500h5M12.500 10v5M10 12.500h5" strokeWidth="1.6" /> },
  { name: '物理', color: 'text-[#56689c]', gap: '', art: <><path d="M11 2.700A6.300 6.300 0 1 0 14 11" strokeWidth="1.6" /><circle cx="8" cy="8.500" r="3.5" fill="#6c94e8" stroke="none" /><circle cx="13.500" cy="3" r="1.8" fill="currentColor" stroke="none" /></> },
  { name: '约束', color: 'text-[#5878b8]', gap: '', art: <><path d="M2.500 6.500 12 1.500q4 0 2.500 4L10.500 13" /><circle cx="6.500" cy="10" r="4.8" strokeWidth="1.8" /><circle cx="6.500" cy="10" r="2" fill="#7aa0e8" stroke="none" /></> },
  { name: '数据', color: 'text-[#1f9a68]', gap: '', art: <><circle cx="3" cy="13" r="2" /><circle cx="13" cy="3" r="2" /><path d="M3 10.500Q3.500 5 7.500 5T14 9t-4 4-5-4q0-4 6-6" strokeWidth="1.5" /></> },
  { name: '材质', color: 'text-[#bb5a6a]', gap: 'mb-[8px]', art: <><circle cx="8" cy="8" r="6.5" /><path d="M8 8V1.500A6.500 6.500 0 0 0 2.500 11.500zM8 8h6.500A6.500 6.500 0 0 1 10 14z" fill="currentColor" stroke="none" /></> },
  { name: '纹理', color: 'text-[#b85464]', gap: '', art: <><path d="M1.500 1.500h13v13h-13z" /><path d="M1 1h3v3H1zM7 1h3v3H7zM4 4h3v3H4zM10 4h3v3h-3zM1 7h3v3H1zM7 7h3v3H7zM4 10h3v3H4zM10 10h3v3h-3zM13 1h2v3h-2zM13 7h2v3h-2z" fill="currentColor" stroke="none" /></> },
]

function Panel({ title, open = false, children }: { title: string; open?: boolean; children?: ReactNode }) {
  return (
    <section className="mb-[2px] w-[200px] rounded-l bg-[#3d3d3d]">
      <button type="button" aria-expanded={open} className="flex h-[27px] w-full items-center gap-[5px] pl-2 text-left text-[#dedede]">
        <Chevron className={`size-[10px] text-[#b0b0b0] ${open ? '' : '-rotate-90'}`} />
        {title}
      </button>
      {children}
    </section>
  )
}

function Properties() {
  const [tab, setTab] = useState('世界')
  return (
    <section className="mt-[3px] flex min-h-0 flex-1 flex-col overflow-hidden bg-[#303030] text-[#d5d5d5]">
      <div className="flex h-7 shrink-0 items-center pl-[10px]">
        <EditorMenu label="编辑器类型" className="w-[31px]">
          <Icon>
            <rect x="1" y="1" width="14" height="6" rx="2.5" fill="currentColor" stroke="none" />
            <rect x="1" y="9" width="14" height="6" rx="2.5" fill="currentColor" stroke="none" />
            <path d="M8.500 2.500h5v3h-5zM10 10.500h3.500v3H10z" fill="#282828" stroke="none" />
          </Icon>
        </EditorMenu>
        <label className="ml-[60px] flex h-5 w-20 shrink-0 items-center rounded bg-[#1d1d1d] pl-1">
          <SearchIcon className="size-[17px]" />
          <input aria-label="搜索属性" className="w-full min-w-0 bg-transparent outline-none" />
        </label>
      </div>
      <div className="flex min-h-0 flex-1">
        <div className="flex w-[31px] shrink-0 flex-col bg-[#1b1b1b] pl-[3px] pt-[9px]">
          {propertyTabs.map((item) => (
            <button
              key={item.name}
              type="button"
              aria-label={item.name}
              onClick={() => setTab(item.name)}
              className={`flex h-[30px] w-7 shrink-0 items-center justify-center rounded-l ${item.color} ${item.gap} ${tab === item.name ? 'bg-[#303030]' : ''}`}
            >
              <Icon>{item.art}</Icon>
            </button>
          ))}
        </div>
        <div className="min-w-0 flex-1 pl-[9px]">
          <div className="flex h-9 w-[200px] items-center pl-1 pt-[2px]">
            <SceneIcon className="mr-[10px] size-4" />
            Scene
            <Chevron className="ml-[14px] size-[11px] -rotate-90" />
          </div>
          <div className="mt-[13px] flex h-5 w-[200px] bg-[#1d1d1d]">
            <Btn label="世界" className="w-[34px] gap-1 rounded-l bg-[#282828]">
              <Icon className="size-[17px]">{worldArt}</Icon>
              <Chevron />
            </Btn>
            <input aria-label="世界名称" defaultValue="World" className="w-[120px] bg-transparent pl-[9px] outline-none" />
          </div>
          <div className="pt-[12px]">
            <Panel title="表(曲)面" open>
              <button type="button" aria-label="使用节点" className="ml-[9px] mt-[9px] flex h-[21px] w-[180px] items-center rounded bg-[#4772b3] pl-1 text-white">
                <Icon className="size-[17px]">
                  <rect x="4" y="1" width="8" height="6" rx="1" fill="currentColor" stroke="none" />
                  <rect x="1" y="9" width="9" height="6" rx="1" fill="currentColor" stroke="none" />
                  <path d="M12 3.500q3 0 3 2v5q0 2-5 2" />
                  <path d="M4 5h8M1 13h9" stroke="#4772b3" strokeWidth="0.8" />
                </Icon>
              </button>
              <div className="flex flex-col whitespace-nowrap pb-[12px] pt-5">
                <span className="mb-[22px] pl-14">表(曲)面</span>
                <span className="mb-[11px] pl-[77px]">颜色</span>
                <span className="pl-[49px]">强度/力度</span>
              </div>
            </Panel>
            <Panel title="体积" />
            <Panel title="雾场通道" />
            <Panel title="视图显示" open>
              <div className="pb-[13px] pl-[77px] pt-[10px]">颜色</div>
            </Panel>
            <Panel title="自定义属性" />
          </div>
        </div>
      </div>
    </section>
  )
}

function StatusBar() {
  return (
    <footer className="shrink-0 bg-[#1b1b1b] text-[#8c8c8c]">
      <div className="flex h-6 items-center overflow-hidden pl-3 pt-px">
        <span className="flex w-[263px] items-center gap-[14px]"><MouseIcon button="left" />蜡笔绘制</span>
        <span className="flex w-[263px] items-center gap-[14px]"><MouseIcon button="middle" />旋转视图</span>
        <span className="flex items-center gap-[14px]"><MouseIcon button="right" />绘制上下文菜单</span>
        <span className="ml-auto shrink-0 whitespace-nowrap">GPencil | 层: 1 | 帧: 1 | 笔画: 41 | 点: 868 | 物体:1/1 | 内存: 85.</span>
      </div>
      <div className="h-[7px] border-t-2 border-[#343434] bg-[#1f1f1f]">
        <div className="ml-[314px] mt-[3px] h-[2px] w-[41px] rounded-t bg-[#383838]" />
      </div>
      <div className="h-[47px] bg-black" />
    </footer>
  )
}

export default function App() {
  return (
    <div className="flex h-screen flex-col overflow-hidden bg-[#161616] font-['DejaVu_Sans','Noto_Sans_CJK_SC',sans-serif] text-xs">
      <div className="flex h-[25px] shrink-0 items-center bg-[#f3f3f3] pl-[2px] pt-[2px] font-['Noto_Sans',sans-serif] text-[#222222]">
        <BlenderLogo className="mr-1 h-4 w-[18px] text-[#e87d0d]" dot="#265787" />
        Blender
      </div>
      <TopBar />
      <div className="flex min-h-0 flex-1">
        <div className="flex min-w-0 flex-1 flex-col">
          <ViewHeader />
          <ToolSettings />
          <Viewport />
          <DopeHeader />
          <div className="flex h-[111px] shrink-0 overflow-hidden">
            <Channels />
            <Timeline />
            <LayerPanel />
          </div>
          <PlaybackBar />
        </div>
        <div className="ml-[2px] flex w-[140px] shrink-0 flex-col overflow-hidden">
          <Outliner />
          <Properties />
        </div>
      </div>
      <StatusBar />
    </div>
  )
}
